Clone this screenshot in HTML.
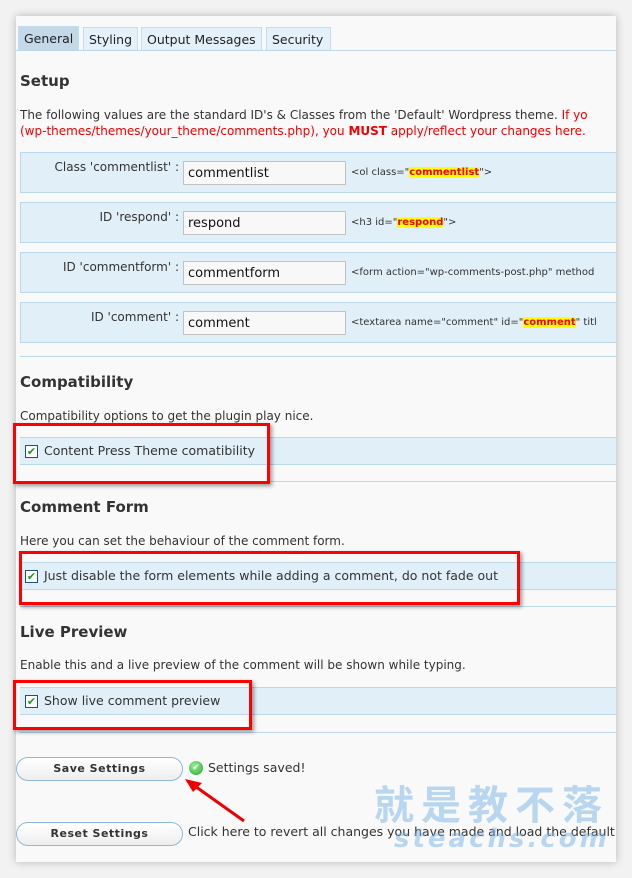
<!DOCTYPE html>
<html><head><meta charset="utf-8"><style>
*{margin:0;padding:0;box-sizing:border-box}
body{width:632px;height:878px;background:#f2f2f2;font-family:"DejaVu Sans","Liberation Sans",sans-serif;font-size:12px;color:#333;position:relative;overflow:hidden}
.panel{position:absolute;left:16px;top:16px;width:600px;height:846px;background:#f9f9f9;overflow:hidden;box-shadow:0 0 8px rgba(0,0,0,.25)}
.a{position:absolute;white-space:nowrap}
.tab{position:absolute;top:11px;height:23px;border:1px solid #c6dcee;border-bottom:none;background:#e4f0fa;font-size:12.5px;padding:4px 5px 0;color:#222}
.h{position:absolute;left:4px;font-size:15px;font-weight:bold;color:#333;font-family:"DejaVu Sans",sans-serif}
.row{position:absolute;left:4px;width:600px;height:41px;background:#e0eff8;border:1px solid #bcd6ea}
.lbl{position:absolute;right:440px;top:7px;font-size:12px;color:#333}
.inp{position:absolute;left:162px;top:8px;width:163px;height:24px;border:1px solid #c2c2c2;background:#f8f8f8;font-size:13px;padding:4px 4px;color:#111}
.code{position:absolute;left:330px;top:14px;font-size:10px;color:#333;white-space:nowrap}
.hl{background:#ff0;color:#e00;font-weight:bold}
.cb{position:absolute;left:5px;top:7px;width:13px;height:13px;border:1px solid #1c5180;background:#fff;color:#1a9a1a;font-size:11px;line-height:11px;text-align:center;font-weight:bold}
.crow{position:absolute;left:4px;width:600px;height:28px;background:#e0eff8;border-top:1px solid #bcd6ea;border-bottom:1px solid #bcd6ea}
.crow span{position:absolute;left:24px;top:5px;font-size:12.5px;color:#333}
.line{position:absolute;left:4px;width:600px;height:1px;background:#bcd6ea}
.red{position:absolute;border:3px solid #f00;box-shadow:2px 2px 4px rgba(0,0,0,.4)}
.btn{position:absolute;left:0;width:167px;height:24px;border:1px solid #8fb8d6;border-radius:12px;background:linear-gradient(#fff,#eee);font-size:11px;font-weight:bold;text-align:center;line-height:22px;color:#333;letter-spacing:.5px}
</style></head><body>
<div class="panel">
<div class="tab" style="left:2px;background:#c3d9ea;height:24px;top:10px">General</div>
<div class="tab" style="left:67px">Styling</div>
<div class="tab" style="left:125px">Output Messages</div>
<div class="tab" style="left:250px;width:65px">Security</div>
<div class="a" style="left:0;top:34px;width:600px;height:1px;background:#bcd6ea"></div>
<div class="h" style="top:56px">Setup</div>
<div class="a" style="left:4px;top:92px;font-size:12px">The following values are the standard ID's &amp; Classes from the 'Default' Wordpress theme. <span style="color:#e00">If yo</span></div>
<div class="a" style="left:4px;top:108px;font-size:12px;color:#e00">(wp-themes/themes/your_theme/comments.php), you <b>MUST</b> apply/reflect your changes here.</div>

<div class="row" style="top:136px"><div class="lbl">Class 'commentlist' :</div><div class="inp">commentlist</div><div class="code">&lt;ol class="<span class="hl">commentlist</span>"&gt;</div></div>
<div class="row" style="top:186px"><div class="lbl">ID 'respond' :</div><div class="inp">respond</div><div class="code">&lt;h3 id="<span class="hl">respond</span>"&gt;</div></div>
<div class="row" style="top:236px"><div class="lbl">ID 'commentform' :</div><div class="inp">commentform</div><div class="code">&lt;form action="wp-comments-post.php" method</div></div>
<div class="row" style="top:286px"><div class="lbl">ID 'comment' :</div><div class="inp">comment</div><div class="code">&lt;textarea name="comment" id="<span class="hl">comment</span>" titl</div></div>
<div class="line" style="top:340px"></div>

<div class="h" style="top:357px">Compatibility</div>
<div class="a" style="left:4px;top:393px">Compatibility options to get the plugin play nice.</div>
<div class="crow" style="top:421px"><div class="cb">✔</div><span>Content Press Theme comatibility</span></div>
<div class="line" style="top:465px"></div>

<div class="h" style="top:482px">Comment Form</div>
<div class="a" style="left:4px;top:518px">Here you can set the behaviour of the comment form.</div>
<div class="crow" style="top:546px"><div class="cb">✔</div><span>Just disable the form elements while adding a comment, do not fade out</span></div>
<div class="line" style="top:590px"></div>

<div class="h" style="top:607px">Live Preview</div>
<div class="a" style="left:4px;top:642px">Enable this and a live preview of the comment will be shown while typing.</div>
<div class="crow" style="top:671px"><div class="cb">✔</div><span>Show live comment preview</span></div>
<div class="line" style="top:716px"></div>

<div class="btn" style="top:741px">Save Settings</div>
<div class="a" style="left:173px;top:745px;width:14px;height:14px;border-radius:50%;background:radial-gradient(circle at 40% 35%,#9e9,#2a2);color:#fff;font-size:9px;text-align:center;line-height:14px">✔</div>
<div class="a" style="left:192px;top:744px;font-size:12.5px">Settings saved!</div>
<div class="btn" style="top:806px">Reset Settings</div>
<div class="a" style="left:172px;top:808px;font-size:12.5px">Click here to revert all changes you have made and load the default</div>

<div class="a" style="left:358px;top:757px;font-size:40px;font-weight:bold;color:rgba(120,180,230,.5);font-family:'Noto Sans CJK SC',sans-serif;letter-spacing:7px">就是教不落</div>
<div class="a" style="left:378px;top:808px;font-size:26px;font-weight:bold;font-style:italic;color:rgba(120,180,230,.5);letter-spacing:3px">steachs.com</div>
</div>

<div class="red" style="left:13px;top:423px;width:257px;height:61px"></div>
<div class="red" style="left:19px;top:551px;width:501px;height:54px"></div>
<div class="red" style="left:13px;top:680px;width:239px;height:50px"></div>

<svg class="a" style="left:180px;top:775px" width="70" height="50"><line x1="64" y1="46" x2="12" y2="9" stroke="#e00" stroke-width="3"/><polygon points="5,4 22,8 13,17" fill="#e00"/></svg>
</body></html>
